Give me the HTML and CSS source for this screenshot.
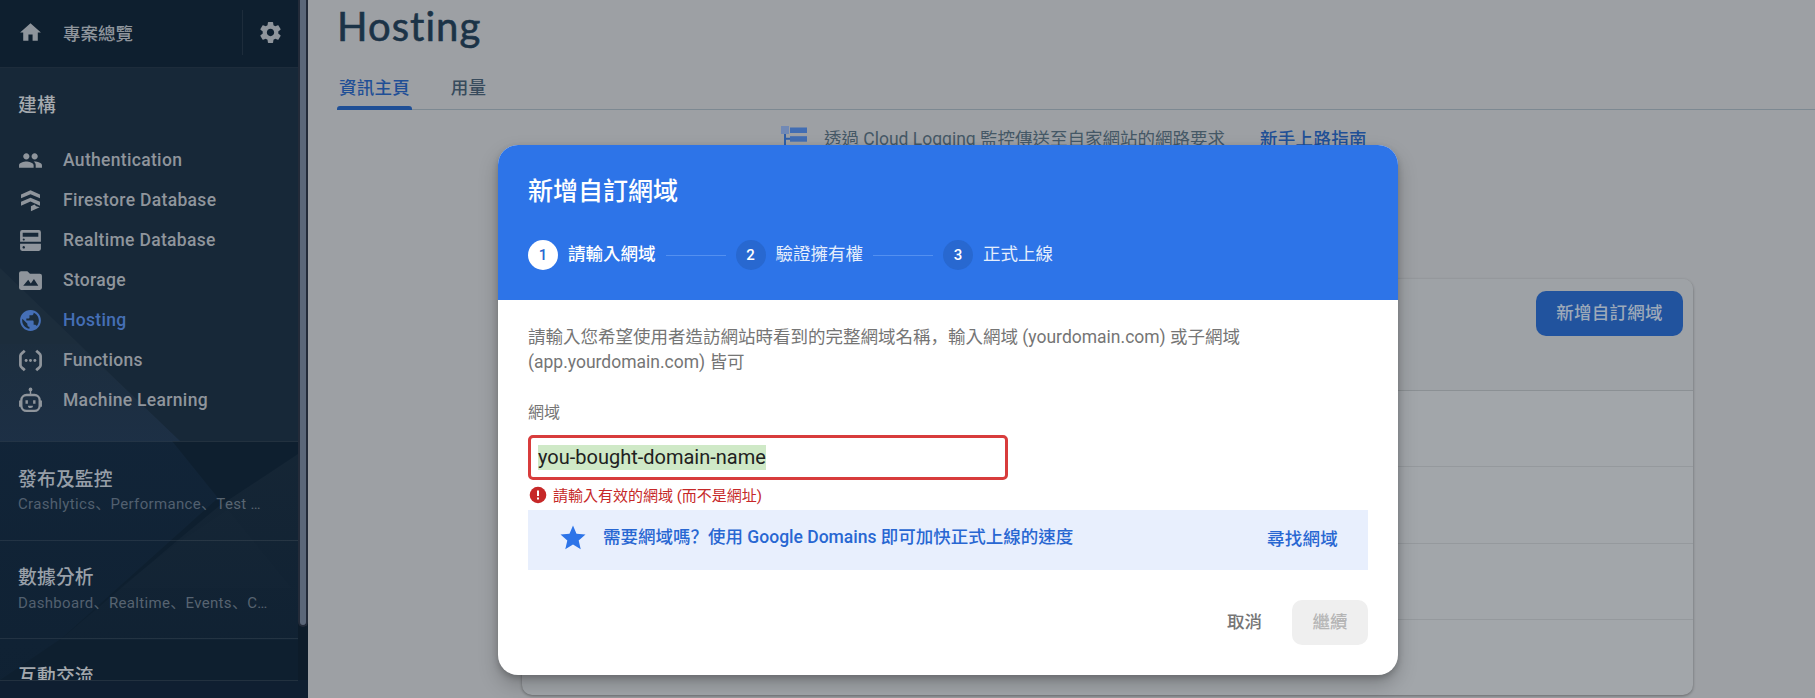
FILE: index.html
```html
<!DOCTYPE html>
<html lang="zh-Hant">
<head>
<meta charset="utf-8">
<title>Hosting</title>
<link rel="stylesheet" href="styles.css">
</head>
<body>
<div class="app">
  <aside class="sidebar">
    <svg class="facets" viewBox="0 0 298 612" preserveAspectRatio="none">
      <defs>
        <linearGradient id="fade" x1="0" y1="0" x2="0" y2="1"><stop offset="0" stop-color="#2348a0" stop-opacity=".02"/><stop offset="1" stop-color="#2348a0" stop-opacity=".09"/></linearGradient>
        <linearGradient id="deep" x1="0" y1="0" x2="0" y2="1"><stop offset="0" stop-color="#2a4a78" stop-opacity=".12"/><stop offset="1" stop-color="#2a4a78" stop-opacity=".06"/></linearGradient>
        <linearGradient id="glow" x1="0" y1="0" x2="0" y2="1"><stop offset="0" stop-color="#fff" stop-opacity=".03"/><stop offset="1" stop-color="#5a7ab0" stop-opacity=".03"/></linearGradient>
      </defs>
      <polygon class="facet-a" points="0,200 180,373 0,373"/>
      <polygon fill="url(#fade)" points="0,276 78,276 180,373 0,373"/>
      <polygon fill="url(#deep)" points="172,373 218,430 62,570 0,612 0,373"/>
      <polygon fill="url(#glow)" points="298,386 218,439 178,472 60,572 298,572"/>
      <polygon class="facet-e" points="228,441 178,474 118,520 292,520"/>
    </svg>
    <div class="sidebar-top">
      <svg class="icon" viewBox="0 0 24 24"><path d="M10 20v-6h4v6h5v-8h3L12 3 2 12h3v8z"/></svg>
      <span class="overview">專案總覽</span>
      <span class="gear"><svg class="icon" viewBox="0 0 24 24"><path d="M19.43 12.98c.04-.32.07-.64.07-.98s-.03-.66-.07-.98l2.11-1.65c.19-.15.24-.42.12-.64l-2-3.46c-.12-.22-.39-.3-.61-.22l-2.49 1c-.52-.4-1.08-.73-1.69-.98l-.38-2.65C14.46 2.18 14.25 2 14 2h-4c-.25 0-.46.18-.49.42l-.38 2.65c-.61.25-1.17.59-1.69.98l-2.49-1c-.23-.09-.49 0-.61.22l-2 3.46c-.13.22-.07.49.12.64l2.11 1.65c-.04.32-.07.65-.07.98s.03.66.07.98l-2.11 1.65c-.19.15-.24.42-.12.64l2 3.46c.12.22.39.3.61.22l2.49-1c.52.4 1.08.73 1.69.98l.38 2.65c.03.24.24.42.49.42h4c.25 0 .46-.18.49-.42l.38-2.65c.61-.25 1.17-.59 1.69-.98l2.49 1c.23.09.49 0 .61-.22l2-3.46c.12-.22.07-.49-.12-.64l-2.11-1.65zM12 15.5c-1.93 0-3.5-1.57-3.5-3.5s1.57-3.5 3.5-3.5 3.5 1.57 3.5 3.5-1.57 3.5-3.5 3.5z"/></svg></span>
    </div>
    <nav class="build">
      <h2 class="group-title">建構</h2>
      <a class="nav-item"><svg class="icon" viewBox="0 0 24 24"><path d="M16 11c1.66 0 2.99-1.34 2.99-3S17.66 5 16 5c-1.66 0-3 1.34-3 3s1.34 3 3 3zm-8 0c1.66 0 2.99-1.34 2.99-3S9.66 5 8 5C6.34 5 5 6.34 5 8s1.34 3 3 3zm0 2c-2.33 0-7 1.17-7 3.5V19h14v-2.5c0-2.33-4.67-3.5-7-3.5zm8 0c-.29 0-.62.02-.97.05 1.16.84 1.97 1.97 1.97 3.45V19h6v-2.5c0-2.33-4.67-3.5-7-3.5z"/></svg><span>Authentication</span></a>
      <a class="nav-item"><svg class="icon" viewBox="0 0 24 24"><path d="M12 2.200l9.100 4v3.700L12 5.900 2.900 9.900V6.200zM12 9.300l9.100 4v3.700L12 13 2.900 17v-3.700zM12.400 17.400l3.400-1.500 1.700 1.700 3.300.8-8.400 4z"/></svg><span>Firestore Database</span></a>
      <a class="nav-item"><svg class="icon" viewBox="0 0 24 24"><path fill-rule="evenodd" d="M4 2h16a2 2 0 0 1 2 2v9.200H2V4a2 2 0 0 1 2-2zM4.500 4.600v3.800h15V4.600zM5.500 10a1 1 0 1 0 .01 0zM2 15h20v5a2 2 0 0 1-2 2H4a2 2 0 0 1-2-2zM5.500 17.300a1.200 1.200 0 1 0 .01 0z"/></svg><span>Realtime Database</span></a>
      <a class="nav-item"><svg class="icon" viewBox="0 0 24 24"><path fill-rule="evenodd" d="M3 3h6l2.500 2.500H21a2 2 0 0 1 2 2V19a2 2 0 0 1-2 2H3a2 2 0 0 1-2-2V5a2 2 0 0 1 2-2zM5 17h14.500l-4.200-6.500-3 4.300-2.500-3.600z"/></svg><span>Storage</span></a>
      <a class="nav-item active"><svg class="icon" viewBox="0 0 24 24"><path d="M12 2C6.480 2 2 6.480 2 12s4.480 10 10 10 10-4.480 10-10S17.520 2 12 2zm-1 17.930c-3.950-.49-7-3.850-7-7.930 0-.62.080-1.210.21-1.790L9 15v1c0 1.100.9 2 2 2v1.930zm6.900-2.540c-.26-.81-1-1.390-1.900-1.390h-1v-3c0-.55-.45-1-1-1H8v-2h2c.55 0 1-.45 1-1V7h2c1.100 0 2-.9 2-2v-.41c2.930 1.190 5 4.060 5 7.410 0 2.080-.8 3.970-2.100 5.390z"/></svg><span>Hosting</span></a>
      <a class="nav-item"><svg class="icon" viewBox="0 0 24 24"><path class="line" d="M6.500 2.700C3.500 5.500 2.300 5.500 2.300 7.500v9c0 2 1.200 2 4.200 4.800M17.500 2.700c3 2.800 4.200 2.800 4.200 4.800v9c0 2-1.200 2-4.200 4.800"/><circle cx="7.800" cy="12" r="1.400"/><circle cx="12" cy="12" r="1.400"/><circle cx="16.200" cy="12" r="1.400"/></svg><span>Functions</span></a>
      <a class="nav-item"><svg class="icon tall" viewBox="0 0 24 24"><rect class="line thin" x="3.200" y="6.700" width="17.600" height="15.300" rx="5"/><path d="M11.300 2h1.400v5h-1.400zM1 12h2v6H1zM21 12h2v6h-2zM7.200 11.800h2.300v3.400H7.200zM14.500 11.800h2.300v3.400h-2.300zM9.500 17h5a2.500 2.200 0 0 1-5 0z"/><circle cx="12" cy="1.400" r="1.800"/></svg><span>Machine Learning</span></a>
    </nav>
    <div class="group"><h2 class="group-title">發布及監控</h2><p class="group-sub">Crashlytics<i lang="zh-Hans">、</i>Performance<i lang="zh-Hans">、</i>Test …</p></div>
    <div class="group"><h2 class="group-title">數據分析</h2><p class="group-sub">Dashboard<i lang="zh-Hans">、</i>Realtime<i lang="zh-Hans">、</i>Events<i lang="zh-Hans">、</i>C…</p></div>
    <div class="group cut"><h2 class="group-title">互動交流</h2></div>
    <div class="sidebar-foot"></div>
  </aside>
  <div class="scrollbar"><div class="thumb"></div></div>
  <main class="main">
    <h1 class="title">Hosting</h1>
    <div class="tabs"><a class="tab current">資訊主頁</a><a class="tab">用量</a></div>
    <div class="notice">
      <svg class="log-icon" viewBox="0 0 26 30"><rect x="0" y="0" width="8" height="8" fill="#7189b5"/><rect x="9" y="1.500" width="17" height="5.500" fill="#416db3"/><rect x="9" y="10.200" width="17" height="5.500" fill="#416db3"/><path d="M3 8h2v3.700h4v2H5V30H3z" fill="#2e5ea8"/></svg>
      <span class="notice-text">透過 Cloud Logging 監控傳送至自家網站的網路要求</span>
      <a class="notice-link">新手上路指南</a>
    </div>
    <section class="card">
      <div class="card-head"><button class="btn-add">新增自訂網域</button></div>
      <div class="row"></div><div class="row"></div><div class="row"></div><div class="row"></div>
    </section>
  </main>
</div>

<div class="dialog">
  <header class="dialog-head">
    <h2 class="dialog-title">新增自訂網域</h2>
    <div class="steps">
      <span class="num on">1</span><span class="step strong">請輸入網域</span><span class="dash"></span>
      <span class="num">2</span><span class="step">驗證擁有權</span><span class="dash"></span>
      <span class="num">3</span><span class="step">正式上線</span>
    </div>
  </header>
  <div class="dialog-body">
    <p class="intro">請輸入您希望使用者造訪網站時看到的完整網域名稱<i lang="zh-Hans">，</i>輸入網域 (yourdomain.com) 或子網域<br>(app.yourdomain.com) 皆可</p>
    <div class="label">網域</div>
    <div class="field"><span class="selected">you-bought-domain-name</span></div>
    <div class="error"><svg class="error-icon" viewBox="0 0 18 18"><circle cx="9" cy="9" r="8.300" fill="#c62828"/><path d="M8 4.500h2v5.500H8zM8 11.500h2v2H8z" fill="#fff"/></svg><span>請輸入有效的網域 (而不是網址)</span></div>
    <div class="promo">
      <svg class="star" viewBox="0 0 24 24"><path fill="#2d74e8" d="M12 17.270L18.180 21l-1.640-7.030L22 9.240l-7.190-.61L12 2 9.190 8.630 2 9.240l5.460 4.730L5.820 21z"/></svg>
      <span class="promo-text">需要網域嗎<i lang="zh-Hans">？</i>使用 Google Domains 即可加快正式上線的速度</span>
      <a class="promo-link">尋找網域</a>
    </div>
    <div class="actions"><a class="cancel">取消</a><button class="next">繼續</button></div>
  </div>
</div>
</body>
</html>
```

FILE: styles.css
```css
* { box-sizing: border-box; }
body, h1, h2, p { margin: 0; }
body {
  width: 1815px; height: 698px; overflow: hidden; position: relative;
  font-family: Roboto, "Noto Sans CJK TC", sans-serif;
  font-size: 17.5px; background: #9da0a4;
}
i { font-style: normal; font-family: "Noto Sans CJK SC", sans-serif; line-height: 1; }
button { border: 0; padding: 0; font: inherit; letter-spacing: inherit; }
.app { display: flex; height: 698px; }

.sidebar { width: 298px; height: 698px; flex: none; background: #0e1f2f; position: relative; color: #a4a9ae; }
.sidebar > * { position: relative; }
.sidebar > .facets { position: absolute; left: 0; top: 68px; width: 298px; height: 612px; z-index: 1; }
.facet-a { fill: #fff; opacity: .022; }
.facet-e { fill: #fff; opacity: .008; }
.icon { width: 25px; height: 25px; fill: #8f959c; flex: none; display: block; }
.tall { overflow: visible; }
.line { fill: none; stroke: #8f959c; stroke-width: 2.6; }
.thin { stroke-width: 2.2; }
.sidebar-top { height: 68px; padding: 0 15px 2px 18px; display: flex; align-items: center; border-bottom: 1px solid #1d2c3b; }
.overview { margin-left: 20px; color: #8f959c; font-weight: 500; font-size: 17.5px; flex: 1; }
.gear { height: 45px; border-left: 1px solid #1d2c3b; padding-left: 15px; display: flex; align-items: center; }
.build { height: 373px; background: #172838; padding-top: 24px; }
.group-title { font-size: 18.75px; font-weight: 500; line-height: 28px; padding-left: 18px; letter-spacing: .2px; }
.build .group-title { margin-bottom: 20px; }
.nav-item { height: 40px; padding-left: 18px; display: flex; align-items: center; gap: 20px; font-weight: 500; font-size: 17.5px; letter-spacing: .32px; color: #8f959c; z-index: 2; position: relative; }
.active { color: #456fb6; }
.active .icon { fill: #456fb6; }
.group { height: 98.500px; border-top: 1px solid #22313f; padding-top: 23.500px; overflow: hidden; }
.group-sub { font-size: 15px; line-height: 22px; letter-spacing: .33px; padding-left: 18px; margin-top: -.5px; color: #56626e; white-space: nowrap; }
.cut { height: 41.500px; }
.sidebar-foot { height: 18px; background: #0f1f31; border-top: 1px solid #22313f; }

.scrollbar { width: 10px; flex: none; background: #0d1c2a; border-bottom: 18px solid #0f1f31; }
.thumb { height: 627px; border: 2px solid #232b39; border-top: 0; background: #5b6779; border-radius: 0 0 5px 5px; }

.main { flex: 1; min-width: 0; }
.title { font-family: Lato, sans-serif; font-weight: 400; font-size: 40px; line-height: 48px; padding: 2px 0 0 29px; color: #1b3347; -webkit-text-stroke: .6px #1b3347; letter-spacing: 1.050px; font-variant-ligatures: none; }
.tabs { margin: 15px 0 0 29px; height: 45px; display: flex; border-bottom: 1px solid #7d8992; }
.tab { height: 45px; width: 75px; line-height: 47px; text-align: center; color: #384b5c; font-weight: 500; letter-spacing: .25px; }
.tab + .tab { margin-left: 19px; }
.current { color: #1f4f96; position: relative; }
.current::after { content: ""; position: absolute; left: 0; bottom: 0; width: 75px; height: 4px; background: #1f4f96; border-radius: 3px 3px 0 0; }
.notice { margin: 16px 0 0 473px; display: flex; height: 30px; align-items: flex-start; }
.log-icon { width: 26px; height: 30px; flex: none; }
.notice-text { margin-left: 17px; width: 436px; color: #455866; white-space: nowrap; line-height: 26px; }
.notice-link { color: #1f4f96; font-weight: 500; line-height: 26px; letter-spacing: .3px; }
.card { width: 1171px; height: 416px; margin: 123px 0 0 214px; border-radius: 10px; background: #a2a6aa; box-shadow: 0 1px 3px rgba(0,0,0,.35); overflow: hidden; }
.card-head { height: 112px; padding: 12px 10px; background: #9ea2a6; border-bottom: 1px solid #8b9094; display: flex; justify-content: flex-end; }
.btn-add { width: 147px; height: 45px; border-radius: 10px; background: #21539e; color: #9da9b9; font-weight: 500; padding-bottom: 4px; letter-spacing: .25px; }
.row { height: 76.300px; border-bottom: 1px solid #95999d; }

.dialog { position: absolute; left: 498px; top: 145px; width: 900px; height: 530px; border-radius: 20px; background: #fff; overflow: hidden; box-shadow: 0 10px 20px rgba(0,0,0,.22), 0 3px 6px rgba(0,0,0,.2); }
.dialog-head { height: 155px; background: #2d74e8; padding: 28px 30px 0; color: #fff; }
.dialog-title { font-weight: 500; font-size: 25px; line-height: 38px; }
.steps { margin-top: 29px; height: 30px; display: flex; align-items: center; white-space: nowrap; }
.num { width: 30px; height: 30px; flex: none; border-radius: 50%; background: #2868d0; font-weight: 500; font-size: 15px; line-height: 30px; text-align: center; margin-right: 10px; }
.on { background: #fff; color: #2868d0; }
.step { color: #e5eefc; padding-bottom: 5px; }
.strong { color: #fff; font-weight: 500; }
.dash { width: 60px; height: 1px; background: #5390f0; margin: 0 10px; }
.dialog-body { padding: 25px 30px 0; color: #757575; }
.intro { line-height: 25px; white-space: nowrap; }
.label { margin-top: 26px; line-height: 24px; font-size: 16px; }
.field { margin-top: 10px; width: 480px; height: 45px; border: 3px solid #d83c3c; border-radius: 5px; padding: 7px; color: #212121; font-size: 20px; }
.selected { display: inline-block; vertical-align: top; height: 25px; line-height: 25px; background: #cfe9c7; }
.error { height: 30px; display: flex; align-items: center; color: #c62828; font-size: 15px; gap: 6px; padding-left: 1px; }
.error span { padding-bottom: 1px; }
.error-icon { width: 18px; height: 18px; }
.promo { height: 60px; background: #e8effd; display: flex; align-items: center; padding: 0 30px 4px; color: #2867d2; font-weight: 500; }
.star { width: 30px; height: 30px; }
.promo-text { margin-left: 15px; flex: 1; white-space: nowrap; padding-bottom: 5px; }
.promo-link { letter-spacing: .25px; padding-bottom: 1px; }
.actions { margin-top: 30px; display: flex; justify-content: flex-end; align-items: center; font-weight: 500; }
.cancel { margin-right: 30px; padding-bottom: 4px; }
.next { width: 76px; height: 45px; border-radius: 10px; background: #efefef; color: #b5b5b5; padding-bottom: 4px; }
```
